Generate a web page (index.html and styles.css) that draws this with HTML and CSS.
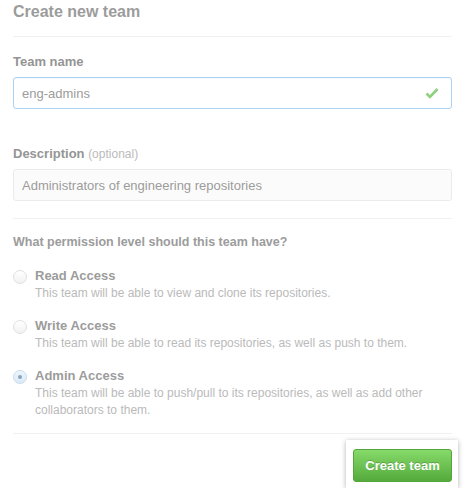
FILE: index.html
```html
<!DOCTYPE html>
<html>
<head>
<meta charset="utf-8">
<link rel="stylesheet" href="styles.css">
</head>
<body>
<div class="page">
  <h2 class="subhead">Create new team</h2>
  <div class="field">
    <label class="label">Team name</label>
    <div class="input focused">
      <span class="value">eng-admins</span>
      <svg class="check" width="14" height="12" viewBox="0 0 14 12"><path d="M1.5 6.5 L5 10 L12.5 2" fill="none" stroke="#8fd07c" stroke-width="2.6"/></svg>
    </div>
  </div>
  <div class="field desc-field">
    <label class="label">Description <span class="note">(optional)</span></label>
    <div class="input plain">
      <span class="value">Administrators of engineering repositories</span>
    </div>
  </div>
  <div class="perms">
    <div class="question">What permission level should this team have?</div>
    <div class="option">
      <span class="radio"></span>
      <div class="opt-text">
        <div class="opt-title">Read Access</div>
        <div class="opt-desc">This team will be able to view and clone its repositories.</div>
      </div>
    </div>
    <div class="option">
      <span class="radio"></span>
      <div class="opt-text">
        <div class="opt-title">Write Access</div>
        <div class="opt-desc">This team will be able to read its repositories, as well as push to them.</div>
      </div>
    </div>
    <div class="option">
      <span class="radio checked"></span>
      <div class="opt-text">
        <div class="opt-title">Admin Access</div>
        <div class="opt-desc">This team will be able to push/pull to its repositories, as well as add other collaborators to them.</div>
      </div>
    </div>
  </div>
  <div class="actions">
    <div class="spot">
      <button class="btn">Create team</button>
    </div>
  </div>
</div>
</body>
</html>
```
FILE: styles.css
```css
html, body { margin: 0; padding: 0; background: #fff; }
body { font-family: "Liberation Sans", Arial, sans-serif; }
.page { width: 439px; margin-left: 13px; }
.subhead {
  margin: 0;
  padding: 2px 0 14px;
  font-size: 16px;
  font-weight: bold;
  color: #9c9c9c;
  border-bottom: 1px solid #f0f0f0;
  line-height: 20px;
}
.field { margin-top: 16px; }
.label { display: block; font-size: 13px; font-weight: bold; color: #959595; line-height: 18px; margin-bottom: 6px; }
.note { font-weight: normal; font-size: 12px; color: #bbb; }
.input {
  height: 30px;
  border-radius: 3px;
  display: flex;
  align-items: center;
  justify-content: space-between;
  padding: 0 12px 0 8px;
  font-size: 13px;
}
.focused { border: 1px solid #a9d2f5; box-shadow: inset 0 1px 1px rgba(0,0,0,0.03); }
.plain { border: 1px solid #ebebeb; background: #fbfbfb; }
.value { color: #9c9c9c; }
.desc-field { margin-top: 36px; }
.perms { margin-top: 17px; border-top: 1px solid #f0f0f0; padding-top: 14px; padding-bottom: 14px; }
.question { font-size: 12.5px; font-weight: bold; color: #9c9c9c; line-height: 18px; margin-bottom: 15px; }
.option { display: flex; align-items: flex-start; margin-bottom: 14px; }
.option:last-child { margin-bottom: 0; }
.radio {
  width: 12px; height: 12px;
  border: 1px solid #e0e0e0;
  border-radius: 50%;
  background: linear-gradient(#fff, #f2f2f2);
  margin: 4px 8px 0 0;
  flex: none;
  position: relative;
}
.radio.checked { border-color: #c8dcef; background: linear-gradient(#eef5fc, #dbe9f7); }
.radio.checked::after {
  content: ""; position: absolute; left: 4px; top: 4px; width: 4px; height: 4px; border-radius: 50%; background: #8aa4bd;
}
.opt-title { font-size: 13px; font-weight: bold; color: #9c9c9c; line-height: 19px; }
.opt-desc { font-size: 12px; color: #bababa; line-height: 17px; }
.actions { border-top: 1px solid #f0f0f0; display: flex; justify-content: flex-end; padding-top: 6px; }
.spot {
  background: #fff;
  padding: 9px 6px 6px 7px;
  margin-right: -6px;
  box-shadow: 0 1px 5px rgba(0,0,0,0.3);
}
.btn {
  display: block;
  font-family: "Liberation Sans", Arial, sans-serif;
  font-size: 13px;
  font-weight: bold;
  color: #fff;
  width: 99px;
  height: 33px;
  padding: 0;
  border: 1px solid #55a53c;
  border-radius: 3px;
  background: linear-gradient(#86da69, #55aa3d);
  text-shadow: 0 -1px 0 rgba(0,0,0,0.2);
}
```
